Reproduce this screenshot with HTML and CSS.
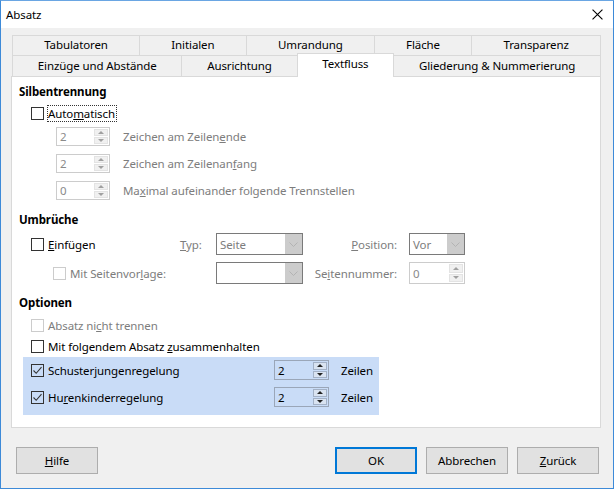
FILE: index.html
```html
<!DOCTYPE html>
<html lang="de">
<head>
<meta charset="utf-8">
<title>Absatz</title>
<link rel="stylesheet" href="styles.css">
</head>
<body>
<div class="window">
  <div class="titlebar">
    <span class="title">Absatz</span>
    <svg class="close" viewBox="0 0 10 10" width="11" height="11"><path d="M0.5 0.5 L9.5 9.5 M9.5 0.5 L0.5 9.5" stroke="#000" stroke-width="1" fill="none"/></svg>
  </div>
  <div class="body">
    <div class="tabs">
      <div class="tabrow row1">
        <div class="tab">Tabulatoren</div>
        <div class="tab">Initialen</div>
        <div class="tab">Umrandung</div>
        <div class="tab">Fläche</div>
        <div class="tab">Transparenz</div>
      </div>
      <div class="tabrow row2">
        <div class="tab">Einzüge und Abstände</div>
        <div class="tab">Ausrichtung</div>
        <div class="tab active">Textfluss</div>
        <div class="tab">Gliederung &amp; Nummerierung</div>
      </div>
    </div>
    <div class="panel">
      <div class="section">Silbentrennung</div>
      <div class="r-check first">
        <span class="cb"></span>
        <span class="focus">Auto<u>m</u>atisch</span>
      </div>
      <div class="r-spin first">
        <div class="spin disabled"><span class="val">2</span><span class="btns"><span class="up"></span><span class="down"></span></span></div>
        <span class="dis">Zeichen am Zeilen<u>e</u>nde</span>
      </div>
      <div class="r-spin">
        <div class="spin disabled"><span class="val">2</span><span class="btns"><span class="up"></span><span class="down"></span></span></div>
        <span class="dis">Zeichen am Zeilenan<u>f</u>ang</span>
      </div>
      <div class="r-spin">
        <div class="spin disabled"><span class="val">0</span><span class="btns"><span class="up"></span><span class="down"></span></span></div>
        <span class="dis">Ma<u>x</u>imal aufeinander folgende Trennstellen</span>
      </div>

      <div class="section s-umbr">Umbrüche</div>
      <div class="breaks">
        <div class="c-check"><span class="cb"></span><span><u>E</u>infügen</span></div>
        <div class="c-typ dis"><u>T</u>yp:</div>
        <div class="combo"><span class="val dis">Seite</span><span class="drop"><svg viewBox="0 0 9 5" width="9" height="5"><path d="M0.5 0.5 L4.5 4.5 L8.5 0.5" stroke="#b3b3b3" fill="none"/></svg></span></div>
        <div class="c-lbl dis"><u>P</u>osition:</div>
        <div class="combo small"><span class="val dis">Vor</span><span class="drop"><svg viewBox="0 0 9 5" width="9" height="5"><path d="M0.5 0.5 L4.5 4.5 L8.5 0.5" stroke="#b3b3b3" fill="none"/></svg></span></div>

        <div class="c-check sub"><span class="cb off"></span><span class="dis">Mit Seitenvor<u>l</u>age:</span></div>
        <div class="c-typ"></div>
        <div class="combo"><span class="val dis"></span><span class="drop"><svg viewBox="0 0 9 5" width="9" height="5"><path d="M0.5 0.5 L4.5 4.5 L8.5 0.5" stroke="#b3b3b3" fill="none"/></svg></span></div>
        <div class="c-lbl dis">Se<u>i</u>tennummer:</div>
        <div class="spin disabled tall"><span class="val">0</span><span class="btns"><span class="up"></span><span class="down"></span></span></div>
      </div>

      <div class="section s-opt">Optionen</div>
      <div class="r-check o1">
        <span class="cb off"></span>
        <span class="dis">Absatz ni<u>c</u>ht trennen</span>
      </div>
      <div class="r-check o2">
        <span class="cb"></span>
        <span>Mit folgendem Absatz <u>z</u>usammenhalten</span>
      </div>
      <div class="hl">
        <div class="hl-row">
          <span class="cb checked"><svg viewBox="0 0 11 11" width="11" height="11"><path d="M1.5 5.5 L4.2 8.3 L9.5 2.2" stroke="#333" stroke-width="1.1" fill="none"/></svg></span>
          <span class="hl-label">Schuster<u>j</u>ungenregelung</span>
          <div class="spin on"><span class="val">2</span><span class="btns"><span class="up"></span><span class="down"></span></span></div>
          <span class="unit">Zeilen</span>
        </div>
        <div class="hl-row">
          <span class="cb checked"><svg viewBox="0 0 11 11" width="11" height="11"><path d="M1.5 5.5 L4.2 8.3 L9.5 2.2" stroke="#333" stroke-width="1.1" fill="none"/></svg></span>
          <span class="hl-label">Hu<u>r</u>enkinderregelung</span>
          <div class="spin on"><span class="val">2</span><span class="btns"><span class="up"></span><span class="down"></span></span></div>
          <span class="unit">Zeilen</span>
        </div>
      </div>
    </div>
    <div class="buttons">
      <button class="btn"><u>H</u>ilfe</button>
      <span class="spacer"></span>
      <button class="btn ok">OK</button>
      <button class="btn">Abbrechen</button>
      <button class="btn"><u>Z</u>urück</button>
    </div>
  </div>
</div>
</body>
</html>
```

FILE: styles.css
```css
* { box-sizing: border-box; }
html, body { margin: 0; padding: 0; }
body {
  width: 614px;
  height: 489px;
  overflow: hidden;
  font-family: "Noto Sans", "Open Sans", sans-serif;
  font-size: 11.5px;
  letter-spacing: -0.1px;
  color: #000;
  background: #fff;
}
u { text-decoration: underline; text-underline-offset: 1px; }

.window {
  width: 614px;
  height: 489px;
  border: 1px solid #3d8ad8;
  border-top-color: #6aa6e3;
  background: #f0f0f0;
  display: flex;
  flex-direction: column;
}

.titlebar {
  height: 27px;
  flex: none;
  background: #fff;
  display: flex;
  align-items: center;
  justify-content: space-between;
  padding: 0 10px 0 5px;
}
.title { line-height: 16px; }
.close { display: block; }

.body {
  flex: 1;
  display: flex;
  flex-direction: column;
  padding: 7px 12px 0 10px;
}

/* tabs */
.tabs { margin-left: 1px; }
.tabrow { display: flex; }
.tab {
  flex: 1 1 auto;
  text-align: center;
  white-space: nowrap;
  background: #f0f0f0;
  border: 1px solid #d9d9d9;
  border-bottom: none;
  margin-left: -1px;
  color: #000;
}
.tab:first-child { margin-left: 0; }
.row1 .tab { height: 20px; line-height: 18px; }
.row2 .tab { height: 21px; line-height: 20px; }
.row2 .tab.active {
  position: relative;
  z-index: 1;
  background: #fff;
  height: 24px;
  margin-top: -2px;
  margin-bottom: -1px;
  line-height: 20px;
}

/* panel */
.panel {
  height: 352px;
  flex: none;
  background: #fff;
  border: 1px solid #d9d9d9;
  padding: 7px 0 0 7px;
  display: flex;
  flex-direction: column;
}
.section { font-weight: bold; height: 16px; line-height: 16px; }
.s-umbr { margin-top: 12px; }
.s-opt { margin-top: 11px; }
.dis { color: #7d7d7d; }

/* checkbox */
.cb {
  width: 13px;
  height: 13px;
  flex: none;
  border: 1px solid #333;
  background: #fff;
  display: inline-flex;
  align-items: center;
  justify-content: center;
}
.cb.off { border-color: #cccccc; }
.cb.checked { background: transparent; }
.cb.checked svg { display: block; }

.r-check {
  height: 18px;
  display: flex;
  align-items: center;
  gap: 4px;
  padding-left: 12px;
}
.r-check.first { margin-top: 4px; }
.r-check.o1 { margin-top: 5px; }
.r-check.o2 { margin-top: 3px; }
.focus {
  outline: 1px dotted #333;
  outline-offset: 0;
  padding: 0 1px 0 0;
  line-height: 15px;
}

/* spin */
.r-spin {
  height: 20px;
  margin-top: 7px;
  display: flex;
  align-items: center;
  gap: 13px;
  padding-left: 37px;
}
.r-spin.first { margin-top: 4px; }
.spin {
  width: 54px;
  height: 19px;
  flex: none;
  border: 1px solid #cccccc;
  background: #fff;
  display: flex;
  align-items: stretch;
}
.spin.tall { height: 22px; }
.spin .val {
  flex: 1;
  padding-left: 3px;
  display: flex;
  align-items: center;
}
.spin.disabled .val { color: #8a8a8a; }
.spin .btns {
  width: 14px;
  flex: none;
  display: flex;
  flex-direction: column;
  margin: 1px 1px 1px 0;
  gap: 1px;
}
.spin .up, .spin .down {
  flex: 1;
  background: #f0f0f0;
  border: 1px solid #e3e3e3;
  display: flex;
  align-items: center;
  justify-content: center;
}
.spin .up::after, .spin .down::after {
  content: "";
  width: 0;
  height: 0;
  border-left: 3px solid transparent;
  border-right: 3px solid transparent;
}
.spin .up::after { border-bottom: 3px solid #a0a0a0; }
.spin .down::after { border-top: 3px solid #a0a0a0; }

.spin.on {
  width: 55px;
  height: 20px;
  border-color: #9aa6b8;
  background: transparent;
}
.spin.on .up, .spin.on .down {
  background: #d9e3f1;
  border-color: #a3b1c6;
}
.spin.on .up::after { border-bottom-color: #222; }
.spin.on .down::after { border-top-color: #222; }

/* Umbrüche grid */
.breaks {
  margin-top: 5px;
  display: grid;
  grid-template-columns: 161px 36px 87px 94px 12px 56px;
  grid-template-rows: 22px 22px;
  row-gap: 7px;
  align-items: center;
}
.c-check {
  display: flex;
  align-items: center;
  gap: 4px;
  padding-left: 12px;
}
.c-check.sub { padding-left: 34px; }
.c-lbl { text-align: right; grid-column: 4; }
.combo, .breaks .spin { grid-column: 6; }
.breaks .combo:not(.small) { grid-column: 3; }
.combo {
  height: 22px;
  border: 1px solid #7a7a7a;
  background: #fff;
  display: flex;
  align-items: stretch;
}
.combo .val { flex: 1; padding-left: 3px; display: flex; align-items: center; }
.combo .drop {
  width: 17px;
  background: #cccccc;
  display: flex;
  align-items: center;
  justify-content: center;
}
.combo .drop svg { display: block; }
.breaks .spin { width: 56px; }

/* highlight */
.hl {
  margin-top: 2px;
  margin-left: 4px;
  width: 356px;
  height: 58px;
  background: #c9dcf7;
  padding: 3px 7px 0 8px;
  display: flex;
  flex-direction: column;
  gap: 7px;
}
.hl-row {
  height: 20px;
  display: flex;
  align-items: center;
}
.hl-label { width: 230px; flex: none; padding-left: 4px; }
.unit { margin-left: 12px; }

/* buttons */
.buttons {
  margin-top: 19px;
  display: flex;
  gap: 9px;
  padding: 0 2px 0 5px;
}
.spacer { flex: 1; }
.btn {
  width: 82px;
  height: 27px;
  background: #e1e1e1;
  border: 1px solid #adadad;
  font-family: inherit;
  font-size: 11.5px;
  letter-spacing: -0.1px;
  color: #000;
  padding: 0;
}
.btn.ok { border: 2px solid #0078d7; }
```
